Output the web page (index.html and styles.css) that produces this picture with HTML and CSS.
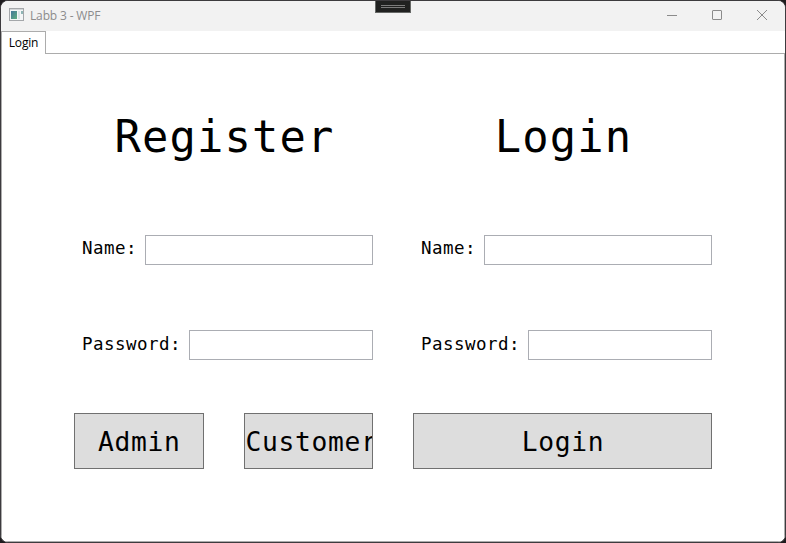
FILE: index.html
```html
<!DOCTYPE html>
<html lang="en">
<head>
<meta charset="utf-8">
<title>Labb 3 - WPF</title>
<link rel="stylesheet" href="styles.css">
</head>
<body>
<div class="window">
  <header class="titlebar">
    <svg class="app-icon" width="16" height="14" viewBox="0 0 16 14">
      <defs><linearGradient id="pane" x1="0" y1="0" x2="1" y2="1"><stop offset="0" stop-color="#44779b"/><stop offset="1" stop-color="#5fae80"/></linearGradient></defs>
      <rect x=".5" y=".5" width="14" height="12" fill="#f4f6f7" stroke="#a4a7aa"/>
      <rect x="1" y="1" width="13" height="1" fill="#d3d6d8"/>
      <rect x="2" y="3" width="6" height="8" fill="url(#pane)"/>
      <rect x="9" y="3" width="2" height="8" fill="#dce4e8"/>
      <rect x="12" y="3" width="2" height="3" fill="#8fb5b5"/>
    </svg>
    <span class="title">Labb 3 - WPF</span>
    <div class="controls">
      <svg width="10" height="10" viewBox="0 0 10 10"><path d="M0 5.5H10"/></svg>
      <svg width="10" height="10" viewBox="0 0 10 10"><rect x=".5" y=".5" width="9" height="9" rx=".5"/></svg>
      <svg width="10" height="10" viewBox="0 0 10 10"><path d="M0 0L10 10M10 0L0 10"/></svg>
    </div>
    <div class="debug-handle"><i></i><i></i></div>
  </header>
  <nav class="tabs"><div class="tab">Login</div><div class="tab-rest"></div></nav>
  <main class="content">
    <section class="panel">
      <h1>Register</h1>
      <label class="field"><span>Name:</span><input type="text"></label>
      <label class="field"><span>Password:</span><input type="password"></label>
      <div class="actions"><button><span>Admin</span></button><button><span>Customer</span></button></div>
    </section>
    <section class="panel">
      <h1>Login</h1>
      <label class="field"><span>Name:</span><input type="text"></label>
      <label class="field"><span>Password:</span><input type="password"></label>
      <div class="actions"><button><span>Login</span></button></div>
    </section>
  </main>
</div>
</body>
</html>
```
FILE: styles.css
```css
* { box-sizing: border-box; }
body { margin: 0; background: #1e1c1e; overflow: hidden; }
.window {
  width: 786px; height: 543px;
  display: flex; flex-direction: column;
  background: #fff;
  border: 1px solid #3d3b3e;
  border-radius: 8px;
  overflow: hidden;
}
.titlebar {
  position: relative;
  flex: none; height: 30px;
  display: flex; align-items: center;
  padding-left: 8px;
  background: #f2f2f2;
}
.app-icon { flex: none; margin-top: -2px; }
.title {
  margin-left: 5px;
  font: 12px/16px "Open Sans", sans-serif;
  letter-spacing: -0.15px;
  color: #8c8c8c;
}
.controls { margin-left: auto; display: flex; gap: 35px; padding-right: 18px; margin-top: -2px; }
.controls svg { display: block; fill: none; stroke: #8b8b8b; stroke-width: 1; overflow: visible; }
.debug-handle {
  position: absolute; left: 374px; top: -1px;
  width: 36px; height: 13px;
  padding: 4px 5px 0;
  display: flex; flex-direction: column; gap: 1px;
  background: #202120;
  border: 1px solid #666866;
}
.debug-handle i { height: 1px; background: #7b7b7b; }
.tabs { flex: none; display: flex; height: 23px; }
.tab {
  width: 45px; height: 23px;
  border: 1px solid #acacac; border-bottom: 0;
  text-align: center;
  font: 12px/22px "Open Sans", sans-serif;
  letter-spacing: -0.2px;
  color: #000;
}
.tab-rest { flex: 1; border-bottom: 1px solid #acacac; }
.content {
  flex: 1;
  display: flex; gap: 40px;
  padding: 0 71px 0 72px;
  border: 1px solid #acacac; border-top: 0;
  font-family: "DejaVu Sans Mono", monospace;
  color: #000;
}
.panel { width: 299px; display: flex; flex-direction: column; }
h1 {
  margin: 53px 0 0; height: 58px;
  padding-left: 2px;
  text-align: center;
  font-size: 43.8px; line-height: 60px; font-weight: 400;
  letter-spacing: 1.13px;
}
.field { display: flex; height: 30px; margin-top: 70px; padding-left: 8px; }
.field + .field { margin-top: 65px; }
.field span { flex: none; margin-right: 8px; font-size: 17.5px; line-height: 26px; letter-spacing: 0.465px; }
.field + .field span { line-height: 28px; }
.field input { flex: 1; min-width: 0; border: 1px solid #abadb3; padding: 0 4px; background: #fff; outline: 0; }
.actions { display: flex; gap: 40px; margin-top: 53px; }
button {
  flex: 1; min-width: 0; height: 56px; padding: 0;
  display: flex; justify-content: safe center; overflow: hidden;
  background: #ddd; border: 1px solid #707070; border-radius: 0;
  font: 26.3px/56px "DejaVu Sans Mono", monospace;
  letter-spacing: 0.67px; color: #000;
}
button span { overflow: hidden; padding-left: 1px; }
```
